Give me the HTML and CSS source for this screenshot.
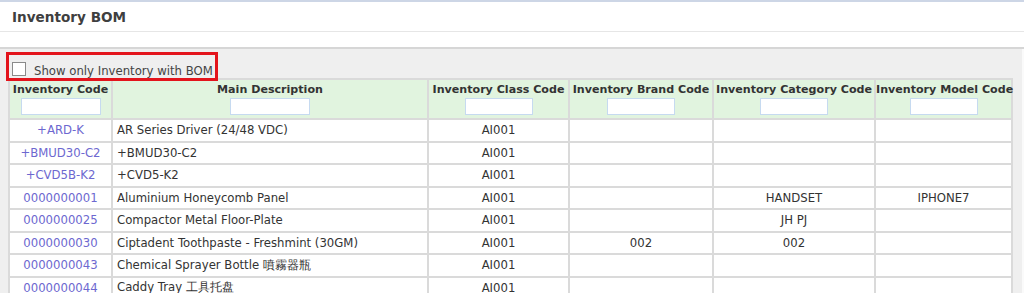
FILE: index.html
```html
<!DOCTYPE html>
<html lang="en">
<head>
<meta charset="UTF-8" />
<title>Inventory BOM</title>
<link rel="stylesheet" href="styles.css">
</head>
<body>

<div class="page-head">
  <h1>Inventory BOM</h1>
</div>
<div class="toolbar"></div>

<div class="panel">
  <div class="panel-body">
    <label class="bom-filter">
      <span class="check"></span>
      Show only Inventory with BOM
    </label>

    <table class="grid">
      <colgroup>
        <col style="width:103px">
        <col style="width:316px">
        <col style="width:141px">
        <col style="width:144px">
        <col style="width:162px">
        <col>
      </colgroup>
      <thead>
        <tr>
          <th>Inventory Code<input type="text" class="f-code"></th>
          <th>Main Description<input type="text" class="f-desc"></th>
          <th>Inventory Class Code<input type="text"></th>
          <th>Inventory Brand Code<input type="text"></th>
          <th>Inventory Category Code<input type="text"></th>
          <th>Inventory Model Code<input type="text"></th>
        </tr>
      </thead>
      <tbody id="rows"></tbody>
    </table>
  </div>
  <div class="scroll-thumb"></div>
</div>

<script>
  const items = [
    { code: "+ARD-K", desc: "AR Series Driver (24/48 VDC)", cls: "AI001", brand: "", cat: "", model: "" },
    { code: "+BMUD30-C2", desc: "+BMUD30-C2", cls: "AI001", brand: "", cat: "", model: "" },
    { code: "+CVD5B-K2", desc: "+CVD5-K2", cls: "AI001", brand: "", cat: "", model: "" },
    { code: "0000000001", desc: "Aluminium Honeycomb Panel", cls: "AI001", brand: "", cat: "HANDSET", model: "IPHONE7" },
    { code: "0000000025", desc: "Compactor Metal Floor-Plate", cls: "AI001", brand: "", cat: "JH PJ", model: "" },
    { code: "0000000030", desc: "Ciptadent Toothpaste - Freshmint (30GM)", cls: "AI001", brand: "002", cat: "002", model: "" },
    { code: "0000000043", desc: "Chemical Sprayer Bottle 噴霧器瓶", cls: "AI001", brand: "", cat: "", model: "" },
    { code: "0000000044", desc: "Caddy Tray 工具托盘", cls: "AI001", brand: "", cat: "", model: "" }
  ];

  const tbody = document.getElementById("rows");
  items.forEach(item => {
    const tr = document.createElement("tr");
    tr.innerHTML =
      `<td class="c"><a href="#">${item.code}</a></td>` +
      `<td>${item.desc}</td>` +
      `<td class="c">${item.cls}</td>` +
      `<td class="c">${item.brand}</td>` +
      `<td class="c">${item.cat}</td>` +
      `<td class="c">${item.model}</td>`;
    tbody.appendChild(tr);
  });
</script>

</body>
</html>
```

FILE: styles.css
```css
:root {
  --text: #333333;
  --link: #6d68d0;
  --line: #dadada;
  --head-bg: #e1f4df;
  --panel-bg: #efefef;
  --red: #e3141c;
}
body {
  margin: 0;
  background: #ffffff;
  color: var(--text);
  font-family: "DejaVu Sans", Verdana, sans-serif;
  font-size: 11.7px;
}
.page-head {
  border-top: 2px solid #cdd6e6;
  border-bottom: 1px solid #e6e6e6;
  height: 29px;
  display: flex;
  align-items: center;
  padding-left: 12px;
}
.page-head h1 {
  margin: 0;
  font-size: 13.6px;
  font-weight: bold;
  color: #3f3f3f;
}
.toolbar {
  height: 15px;
  border-bottom: 2px solid #d6d6d6;
}
.panel {
  background: var(--panel-bg);
  height: 244px;
  overflow: hidden;
  position: relative;
  border-right: 2px solid #fafafa;
}
.panel-body {
  padding: 3px 9px 0 8px;
}
.bom-filter {
  display: flex;
  align-items: flex-end;
  gap: 8px;
  width: 203px;
  height: 21px;
  margin-left: -2px;
  padding: 2px 0 0 3px;
  border: 3px solid var(--red);
  color: #444;
  white-space: nowrap;
  position: relative;
  z-index: 1;
  margin-bottom: -3px;
}
.bom-filter .check {
  width: 12px;
  height: 12px;
  border: 1px solid #8a8a8a;
  background: #fff;
  margin-bottom: 2px;
}
.grid {
  width: 100%;
  border-collapse: collapse;
  table-layout: fixed;
  border: 2px solid var(--line);
}
.grid th {
  background: var(--head-bg);
  font-size: 11.1px;
  font-weight: bold;
  color: #333;
  border: 2px solid var(--line);
  padding: 3px 0 3px;
  white-space: nowrap;
  vertical-align: top;
}
.grid th input {
  display: block;
  margin: 2px auto 0;
  width: 66px;
  height: 15px;
  padding: 0;
  border: 1px solid #c6daf0;
  background: #fff;
}
.grid th input.f-code,
.grid th input.f-desc {
  width: 78px;
}
.grid td {
  background: #fff;
  border: 2px solid var(--line);
  height: 18.5px;
  padding: 1px 4px;
  white-space: nowrap;
  overflow: hidden;
}
.grid td.c {
  text-align: center;
}
.grid td a {
  color: var(--link);
  text-decoration: none;
}
.scroll-thumb {
  position: absolute;
  right: -2px;
  top: 147px;
  width: 2px;
  height: 12px;
  background: #9a9a9a;
}
```
